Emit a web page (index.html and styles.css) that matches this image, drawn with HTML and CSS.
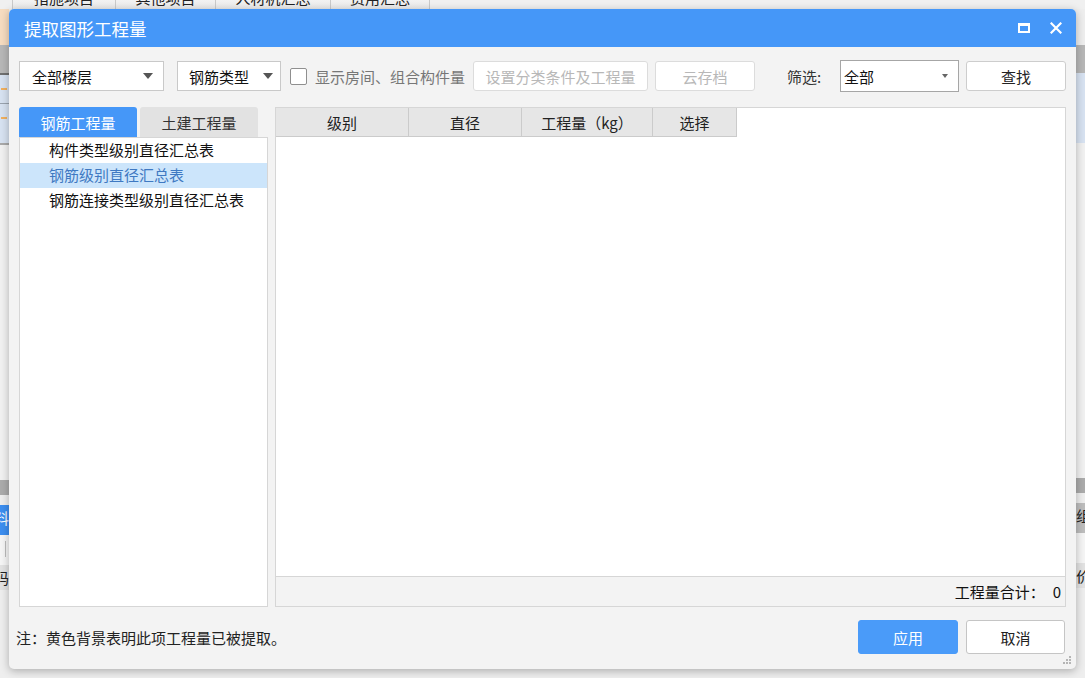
FILE: index.html
```html
<!DOCTYPE html>
<html lang="zh">
<head>
<meta charset="utf-8">
<title>提取图形工程量</title>
<link rel="stylesheet" href="styles.css">
</head>
<body>
<div class="backdrop">
  <div class="bg-tabs">
    <div class="bg-tab t1"><span>措施项目</span></div>
    <div class="bg-tab t2"><span>其他项目</span></div>
    <div class="bg-tab t3"><span>人材机汇总</span></div>
    <div class="bg-tab t4"><span>费用汇总</span></div>
    <div class="bg-tab-rest"></div>
  </div>
  <div class="bg-body">
    <div class="strip strip-left">
      <div class="band peach"></div>
      <div class="band gray"></div>
      <div class="band darkline"></div>
      <div class="band blue1"><i class="dash"></i></div>
      <div class="band sep"></div>
      <div class="band blue2"><i class="dash"></i></div>
      <div class="band sep2"></div>
      <div class="band light"></div>
      <div class="band gray2"></div>
      <div class="band light3"></div>
      <div class="band hilite"><span>料</span></div>
      <div class="band light4"><i class="vline"></i></div>
      <div class="band cell"><span>码</span></div>
      <div class="band light5"></div>
    </div>
    <div class="strip-gap"></div>
    <div class="strip strip-right">
      <div class="band light0"></div>
      <div class="band gray"></div>
      <div class="band blue3"></div>
      <div class="band light"></div>
      <div class="band gray2"></div>
      <div class="band light3"></div>
      <div class="band graycell"><span>组价</span></div>
      <div class="band light4"></div>
      <div class="band cell"><span>价</span></div>
      <div class="band light5"></div>
    </div>
  </div>
</div>

<div class="dialog">
  <div class="titlebar">
    <div class="title">提取图形工程量</div>
    <div class="title-btns">
      <svg class="icon-max" width="12" height="10" viewBox="0 0 12 10"><rect x="1" y="1.5" width="10" height="7.5" fill="none" stroke="#fff" stroke-width="2"/><rect x="0" y="0" width="12" height="3" fill="#fff"/></svg>
      <svg class="icon-close" width="12" height="12" viewBox="0 0 12 12"><path d="M1.5 1.5 L10.5 10.5 M10.5 1.5 L1.5 10.5" stroke="#fff" stroke-width="2.2" stroke-linecap="square"/></svg>
    </div>
  </div>
  <div class="content">
    <div class="toolbar">
      <div class="select sel-floor"><span>全部楼层</span><i class="caret"></i></div>
      <div class="select sel-type"><span>钢筋类型</span><i class="caret"></i></div>
      <div class="check"></div>
      <div class="check-label">显示房间、组合构件量</div>
      <div class="btn disabled btn-set">设置分类条件及工程量</div>
      <div class="btn disabled btn-cloud">云存档</div>
      <div class="filter-label">筛选:</div>
      <div class="select sel-filter"><span>全部</span><i class="caret small"></i></div>
      <div class="btn btn-find">查找</div>
    </div>
    <div class="main">
      <div class="left">
        <div class="tabs">
          <div class="tab active">钢筋工程量</div>
          <div class="tab">土建工程量</div>
        </div>
        <div class="list">
          <div class="item">构件类型级别直径汇总表</div>
          <div class="item selected">钢筋级别直径汇总表</div>
          <div class="item">钢筋连接类型级别直径汇总表</div>
        </div>
      </div>
      <div class="right">
        <div class="grid">
          <div class="grid-head">
            <div class="th c1">级别</div>
            <div class="th c2">直径</div>
            <div class="th c3">工程量（kg）</div>
            <div class="th c4">选择</div>
          </div>
          <div class="grid-body"></div>
        </div>
        <div class="summary"><span>工程量合计：</span><span class="sum-val">0</span></div>
      </div>
    </div>
    <div class="footer">
      <div class="note">注：黄色背景表明此项工程量已被提取。</div>
      <div class="footer-btns">
        <div class="btn primary">应用</div>
        <div class="btn btn-cancel">取消</div>
      </div>
    </div>
  </div>
  <svg class="grip" width="9" height="9" viewBox="0 0 9 9" fill="#b5b5b5"><rect x="6" y="0" width="2" height="2"/><rect x="3" y="3" width="2" height="2"/><rect x="6" y="3" width="2" height="2"/><rect x="0" y="6" width="2" height="2"/><rect x="3" y="6" width="2" height="2"/><rect x="6" y="6" width="2" height="2"/></svg>
</div>
</body>
</html>
```

FILE: styles.css
```css
* { box-sizing: border-box; }
html, body { margin: 0; padding: 0; }
body {
  width: 1085px;
  height: 678px;
  overflow: hidden;
  position: relative;
  font-family: "Noto Sans CJK SC", "Noto Sans", sans-serif;
  font-size: 15px;
  color: #222;
  background: #eeeeee;
}

/* ---------- backdrop application ---------- */
.backdrop { width: 1085px; height: 678px; display: flex; flex-direction: column; }
.bg-tabs { height: 9px; display: flex; background: #f0f0f0; overflow: hidden; }
.bg-tab {
  height: 9px; display: flex; align-items: flex-end; justify-content: center;
  border-left: 1px solid #c9c9c9; background: linear-gradient(#f2f2f2, #e9e9e9);
  color: #222; font-size: 15px;
}
.bg-tab span { display: block; line-height: 16px; height: 16px; flex: none; margin-bottom: 3px; }
.t1 { margin-left: 12px; width: 103px; }
.t2 { width: 100px; }
.t3 { width: 115px; }
.t4 { width: 100px; border-right: 1px solid #c9c9c9; }
.bg-tab-rest { flex: 1; }
.bg-body { flex: 1; display: flex; }
.strip { width: 9px; display: flex; flex-direction: column; overflow: hidden; }
.strip-gap { flex: 1; }
.band { flex: none; position: relative; }
.band span { position: absolute; top: 4px; font-size: 15px; line-height: 18px; white-space: nowrap; }
.strip-left .band span { right: 0; }
.strip-right .band span { left: 0; }
.peach { height: 36px; background: #f6dcc0; }
.light0 { height: 36px; background: #eeeeee; }
.gray { height: 28px; background: #b7b7b7; }
.darkline { height: 2px; background: #707070; }
.blue1 { height: 28px; background: #d7e2f1; }
.blue2 { height: 39px; background: #d7e2f1; }
.blue3 { height: 70px; background: #d7e2f1; }
.sep { height: 1px; background: #9aa3ae; }
.sep2 { height: 2px; background: #a9a9a9; }
.dash { position: absolute; left: 1px; top: 13px; width: 6px; height: 2px; background: #f0b060; }
.light { height: 335px; background: #f1f1f1; }
.gray2 { height: 15px; background: #ababab; }
.light3 { height: 10px; background: #eeeeee; }
.hilite { height: 30px; background: #3c8ef0; color: #fff; }
.graycell { height: 30px; background: #bdbdbd; color: #222; }
.light4 { height: 30px; background: #f5f5f5; }
.vline { position: absolute; left: 5px; top: 6px; width: 1px; height: 16px; background: #bbb; }
.cell { height: 25px; background: #e2e2e2; color: #222; }
.light5 { flex: 1; background: #eeeeee; }

/* ---------- dialog ---------- */
.dialog {
  position: absolute;
  left: 9px; top: 9px;
  width: 1067px; height: 660px;
  background: #f3f3f3;
  border-radius: 5px;
  box-shadow: 0 2px 8px rgba(0,0,0,0.28);
  display: flex; flex-direction: column;
  overflow: hidden;
}
.titlebar {
  height: 38px; flex: none;
  background: #4597f8;
  display: flex; align-items: center; justify-content: space-between;
  padding: 0 14px 0 15px;
  color: #fff;
}
.title { font-size: 17.5px; line-height: 20px; margin-top: 2px; }
.title-btns { display: flex; align-items: center; gap: 20px; }
.icon-max { display: block; }
.icon-close { display: block; }

.content { flex: 1; display: flex; flex-direction: column; padding: 13px 10px 0 10px; }

.toolbar { height: 32px; display: flex; align-items: center; flex: none; }
.select {
  height: 30px; background: #fff; border: 1px solid #c9c9c9;
  display: flex; align-items: center; justify-content: space-between;
  padding: 0 10px 0 12px; color: #111; flex: none;
}
.caret { width: 0; height: 0; border-left: 5px solid transparent; border-right: 5px solid transparent; border-top: 6px solid #555; }
.caret.small { border-left-width: 3px; border-right-width: 3px; border-top-width: 4px; border-top-color: #666; }
.sel-floor { width: 145px; }
.sel-type { width: 104px; margin-left: 13px; padding-left: 11px; padding-right: 7px; }
.check { width: 17px; height: 17px; margin-left: 9px; background: #fff; border: 1px solid #8f8f8f; border-radius: 2px; flex: none; }
.check-label { margin-left: 8px; width: 150px; flex: none; color: #777; white-space: nowrap; }
.btn {
  height: 30px; display: flex; align-items: center; justify-content: center;
  background: #fff; border: 1px solid #cdcdcd; border-radius: 3px; color: #222;
  white-space: nowrap; flex: none;
}
.btn.disabled { color: #b8b8b8; border-color: #dcdcdc; }
.btn-set { width: 175px; margin-left: 8px; }
.btn-cloud { width: 100px; margin-left: 7px; }
.filter-label { margin-left: 32px; width: 53px; flex: none; color: #333; }
.sel-filter { width: 119px; height: 32px; border-color: #a6a6a6; padding-left: 3px; padding-right: 10px; }
.btn-find { width: 100px; margin-left: 7px; }

.main { height: 500px; margin-top: 15px; display: flex; gap: 7px; flex: none; }
.left { width: 249px; flex: none; display: flex; flex-direction: column; }
.tabs { display: flex; gap: 3px; height: 30px; }
.tab {
  width: 118px; height: 30px; display: flex; align-items: center; justify-content: center;
  background: #e2e2e2; color: #333; font-size: 15px; border-radius: 3px 3px 0 0;
}
.tab.active { background: #4597f8; color: #fff; }
.list { flex: 1; background: #fff; border: 1px solid #d6d6d6; }
.item { height: 25px; line-height: 24px; padding-left: 29px; color: #111; white-space: nowrap; }
.item.selected { background: #cce5fb; color: #3f79c2; }

.right { flex: 1; display: flex; flex-direction: column; border: 1px solid #d6d6d6; background: #fff; }
.grid { flex: 1; display: flex; flex-direction: column; }
.grid-head { display: flex; height: 29px; }
.th {
  height: 29px; display: flex; align-items: center; justify-content: center;
  background: #e6e6e6; border-right: 1px solid #cbcbcb; border-bottom: 1px solid #cbcbcb; color: #222;
}
.c1 { width: 133px; }
.c2 { width: 113px; }
.c3 { width: 131px; }
.c4 { width: 84px; }
.grid-body { flex: 1; }
.summary {
  height: 30px; flex: none; background: #f3f3f3; border-top: 1px solid #d6d6d6;
  display: flex; align-items: center; justify-content: flex-end; padding-right: 4px; color: #111;
}
.sum-val { margin-left: 8px; }

.footer { flex: 1; display: flex; align-items: center; justify-content: space-between; padding-bottom: 2px; }
.note { margin-left: -3px; color: #222; }
.footer-btns { display: flex; gap: 8px; margin-right: 1px; }
.footer-btns .btn { width: 100px; height: 34px; font-size: 15px; }
.btn.primary { background: #4a9bf9; border-color: #4a9bf9; color: #fff; }
.footer-btns .btn-cancel { width: 99px; border-color: #c5c5c5; }

.grip { position: absolute; right: 4px; bottom: 4px; }
```
